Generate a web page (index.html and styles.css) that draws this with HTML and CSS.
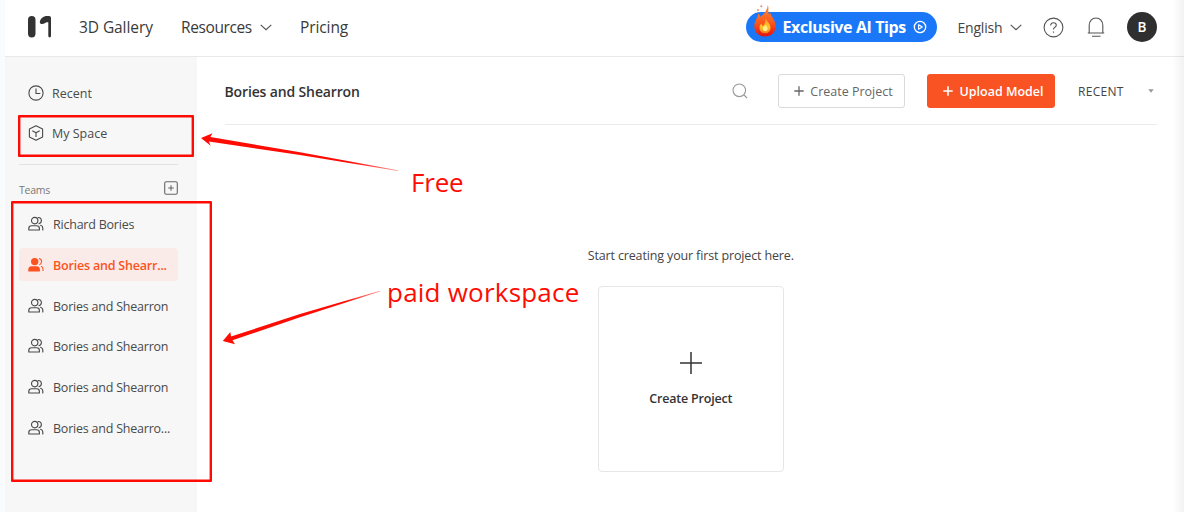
FILE: index.html
```html
<!DOCTYPE html>
<html lang="en">
<head>
<meta charset="utf-8">
<title>Bories and Shearron</title>
<link rel="stylesheet" href="styles.css">
</head>
<body>
<svg class="defs" width="0" height="0" aria-hidden="true">
  <symbol id="team" viewBox="0 0 16 16">
    <g fill="none" stroke="currentColor" stroke-width="1.15" stroke-linecap="round" stroke-linejoin="round">
      <circle cx="6.700" cy="4.600" r="3.200"/>
      <path d="M.8 14v-1.600c0-1.800 1.200-2.700 2.800-2.700h5c1.600 0 2.800.9 2.800 2.700V14z"/>
      <path d="M10.200 1.500c2 .1 3.200 1.400 3.200 3.100s-1.100 2.800-2.500 3.100M12.600 9.300c1.400.4 2.200 1.300 2.200 2.700v2"/>
    </g>
  </symbol>
</svg>
<div class="app">
  <header class="topbar">
    <svg class="logo" viewBox="0 0 24 22" fill="#333">
      <rect x="0" y="0" width="7.500" height="21.500" rx="3.700"/>
      <path d="M11.800 6C12.300 2.500 15.500.1 19 .1h2c1.300 0 2 .8 2 2v17.700c0 2.100-2.700 2.100-2.700 0V6.200c-1.800-.3-2.500.4-3.600 1.100-2.400 1.400-5.100.7-4.900-1.300z"/>
    </svg>
    <a class="nav gallery">3D Gallery</a>
    <a class="nav resources">Resources</a>
    <svg class="chev" viewBox="0 0 12 7"><path d="M.7.9 6 5.700 11.300.9"/></svg>
    <a class="nav pricing">Pricing</a>
    <a class="tips">
      <svg class="flame" viewBox="0 0 24 34">
        <defs>
          <linearGradient id="fire" x1="0" y1="0" x2="0" y2="1"><stop offset="0" stop-color="#ff8a3c"/><stop offset=".55" stop-color="#fb5a1c"/><stop offset="1" stop-color="#e31212"/></linearGradient>
          <linearGradient id="core" x1="0" y1="0" x2="0" y2="1"><stop offset="0" stop-color="#ff9a2e"/><stop offset=".6" stop-color="#ffc42a"/><stop offset="1" stop-color="#ff7a1e"/></linearGradient>
        </defs>
        <path fill="url(#fire)" d="M14.800 1c1.500 3-.5 6.500 1.200 9.500.8-.8.8-1.700 1-2.500 1 4.500 5.700 8 5.700 14.500C22.700 28.500 18 32.500 12 32.500S1.300 28.500 1.300 22.500C1.300 17 4.500 15 5.200 9.500c1.300.8 2 2 2.300 3.500C11 10 14.500 6 14.800 1z"/>
        <path fill="url(#core)" d="M12.500 14c1.500 4 5 5.500 5 9.800 0 3.500-2.400 5.500-5.500 5.500s-5.500-2-5.500-5.300c0-2.200.8-3.500 2.100-4.500.2 1.300.7 2 1.400 2.500 2-2 2.800-4.500 2.500-8z"/>
        <path fill="#fff08a" d="M12.500 20.500c.8 1.800 2.100 2.500 2.100 4.200s-1.200 2.300-2.400 2.300-2.400-.9-2.400-2.300c0-1 .4-1.500 1-1.900.8-.6 1.500-1.300 1.700-2.300z"/>
        <circle cx="8.300" cy="2.300" r="1" fill="#f98052"/><circle cx="5" cy="6" r=".9" fill="#f98052"/>
      </svg>
      <span class="tips-text">Exclusive AI Tips</span>
      <svg class="play" viewBox="0 0 14 14"><circle cx="7" cy="7" r="5.700" fill="none" stroke="#fff" stroke-width="1.300"/><path d="M5.600 4.700v4.600L9.300 7z" fill="none" stroke="#fff" stroke-width="1.100" stroke-linejoin="round"/></svg>
    </a>
    <a class="lang">English</a>
    <svg class="chev" viewBox="0 0 12 7"><path d="M.7.9 6 5.700 11.300.9"/></svg>
    <svg class="help" viewBox="0 0 21 21"><circle cx="10.500" cy="10.500" r="9.400"/><path d="M7.700 8.400c0-1.600 1.200-2.700 2.800-2.700s2.800 1 2.800 2.500c0 2-2.800 2-2.800 4.100v.3M10.500 14.500v1.200"/></svg>
    <svg class="bell" viewBox="0 0 18 20"><path d="M2.200 16V8.200C2.200 4 5 1 9 1s6.800 3 6.800 7.200V16M.8 16h16.400M5 19.200h8.500"/></svg>
    <span class="avatar">B</span>
  </header>

  <div class="body">
    <aside class="side">
      <a class="row recent">
        <svg class="ico" viewBox="0 0 16 16"><g fill="none" stroke="currentColor" stroke-width="1.100"><circle cx="8" cy="8" r="7.100"/><path d="M8 3.500V8.500h4.300"/></g></svg>
        <span>Recent</span>
      </a>
      <a class="row space">
        <svg class="ico" viewBox="0 0 16 16"><g fill="none" stroke="currentColor" stroke-width="1.100" stroke-linejoin="round"><path d="M8 .8 14.600 4v8L8 15.200 1.400 12V4z"/><path d="M4.300 5.700 8 7.800l3.700-2.100M8 7.800v4.200"/></g></svg>
        <span>My Space</span>
      </a>
      <div class="rule"></div>
      <div class="teams-head">
        <span class="teams">Teams</span>
        <svg class="add" viewBox="0 0 14 14"><rect x=".7" y=".7" width="12.600" height="12.600" rx="1.500"/><path d="M7 4.200v5.600M4.200 7h5.600"/></svg>
      </div>
      <nav class="team-list">
        <a class="row rich"><svg class="ico"><use href="#team"/></svg><span>Richard Bories</span></a>
        <a class="row active">
          <svg class="ico" viewBox="0 0 16 16"><circle cx="6.700" cy="4.600" r="3.700" fill="currentColor"/><path fill="currentColor" d="M.3 14.500v-2.100C.3 10.300 1.700 9.200 3.600 9.200h5c1.900 0 3.300 1.100 3.300 3.200v2.100z"/><path d="M11 1.500c1.600.4 2.600 1.500 2.600 3.100s-.9 2.700-2.300 3.100M13 9.300c1.300.5 2 1.400 2 2.700v2" fill="none" stroke="currentColor" stroke-width="1.100"/></svg>
          <span>Bories and Shearr...</span></a>
        <a class="row"><svg class="ico"><use href="#team"/></svg><span>Bories and Shearron</span></a>
        <a class="row"><svg class="ico"><use href="#team"/></svg><span>Bories and Shearron</span></a>
        <a class="row"><svg class="ico"><use href="#team"/></svg><span>Bories and Shearron</span></a>
        <a class="row"><svg class="ico"><use href="#team"/></svg><span>Bories and Shearro...</span></a>
      </nav>
    </aside>

    <main class="main">
      <div class="toolbar">
        <h1 class="title">Bories and Shearron</h1>
        <svg class="search" viewBox="0 0 16 16"><circle cx="7.300" cy="7.300" r="6.300"/><path d="m12 12 3 3"/></svg>
        <a class="btn"><svg class="plus" viewBox="0 0 10 10"><path d="M5 .3v9.400M.3 5h9.400"/></svg><span>Create Project</span></a>
        <a class="btn primary"><svg class="plus" viewBox="0 0 10 10"><path d="M5 .3v9.400M.3 5h9.400"/></svg><span>Upload Model</span></a>
        <span class="sort">RECENT</span>
        <svg class="caret" viewBox="0 0 6 4"><path d="M.3.200h5.400L3 3.800z"/></svg>
      </div>
      <section class="empty">
        <p class="hint">Start creating your first project here.</p>
        <a class="card">
          <svg class="bigplus" viewBox="0 0 22 22"><path d="M11 0v22M0 11h22"/></svg>
          <span>Create Project</span>
        </a>
      </section>
    </main>
  </div>

  <div class="mark mark-space"></div>
  <div class="mark mark-teams"></div>
  <svg class="arrows" viewBox="0 0 1184 512">
    <defs>
      <linearGradient id="a1" gradientUnits="userSpaceOnUse" x1="350" y1="0" x2="400" y2="0"><stop offset="0" stop-color="#fe0c04"/><stop offset="1" stop-color="#fe0c04" stop-opacity=".4"/></linearGradient>
      <linearGradient id="a2" gradientUnits="userSpaceOnUse" x1="345" y1="0" x2="382" y2="0"><stop offset="0" stop-color="#fe0c04"/><stop offset="1" stop-color="#fe0c04" stop-opacity=".4"/></linearGradient>
    </defs>
    <path fill="url(#a1)" d="M201 137.900 212.500 133.200 210.300 137 300 152.200 398 170.300 398 171 300 155.100 208.800 141.600 210.700 145.700z"/>
    <path fill="url(#a2)" d="M222.800 341 230.300 332 231 336.600 300 314 380 290.700 380 291.400 300 317.200 232.500 340.300 235 344.300z"/>
  </svg>
  <span class="note note-free">Free</span>
  <span class="note note-paid">paid workspace</span>
  <div class="edge"></div>
</div>
</body>
</html>
```
FILE: styles.css
```css
* { box-sizing: border-box; }
body { margin: 0; background: #fff; font-family: "Open Sans", "Noto Sans", sans-serif; color: #444; }
.defs { position: absolute; }
.app { position: relative; width: 1184px; height: 512px; overflow: hidden; border-left: 5px solid #fafbfd; background: #fff; }
span, a { white-space: nowrap; }
svg { display: block; flex: none; }

.topbar { display: flex; align-items: center; height: 57px; padding: 0 27px 2px 23px; border-bottom: 1px solid #e9e9e9; }
.logo { width: 24px; height: 22px; margin-right: 27px; }
.nav { font-size: 15.500px; line-height: 22px; color: #3a3a3a; }
.gallery { width: 102px; letter-spacing: -.08px; }
.resources { width: 79px; letter-spacing: -.4px; }
.chev { width: 12px; height: 7px; fill: none; stroke: #555; stroke-width: 1.200; }
.pricing { margin-left: 28px; letter-spacing: -.1px; }
.tips { position: relative; display: flex; align-items: center; width: 191px; height: 30px; margin-left: auto; padding-left: 37px; border-radius: 15px; background: #1a78f8; color: #fff; }
.flame { position: absolute; left: 7px; top: -8px; width: 24px; height: 34px; }
.tips-text { width: 130px; font-size: 16px; font-weight: 700; letter-spacing: -.4px; }
.play { width: 14px; height: 14px; }
.lang { width: 52px; margin-left: 21px; font-size: 14px; letter-spacing: -.2px; }
.help { width: 21px; height: 21px; margin-left: 21.500px; fill: none; stroke: #555; stroke-width: 1.100; }
.bell { width: 18px; height: 20px; margin-left: 23px; fill: none; stroke: #555; stroke-width: 1.100; }
.avatar { width: 30px; height: 30px; margin-left: 22px; border-radius: 50%; background: #2f2f2f; color: #fff; font-size: 13.500px; font-weight: 600; line-height: 30px; text-align: center; }

.body { display: flex; height: 455px; }
.side { width: 191.500px; padding: 19px 18.500px 0 14px; background: #f7f7f7; }
.row { display: flex; align-items: center; height: 33px; margin-bottom: 7.750px; padding-left: 9px; border-radius: 4px; font-size: 12.500px; line-height: 18px; letter-spacing: -.22px; color: #4a4a4a; }
.row span { padding-top: 2px; }
.rich { letter-spacing: -.22px; }
.ico { width: 16px; height: 16px; margin-right: 9px; }
.recent .ico, .space .ico { margin-right: 8px; }
.recent, .space { letter-spacing: 0; }
.rule { height: 1px; margin-top: 14.500px; background: #e2e2e2; }
.teams-head { display: flex; align-items: center; justify-content: space-between; height: 16px; margin: 16px 0 10.250px; font-size: 10.500px; letter-spacing: -.25px; color: #777; }
.teams { padding-top: 2px; }
.add { width: 14px; height: 14px; margin-bottom: 3px; fill: none; stroke: #666; stroke-width: 1.100; }
.active { background: #faeae8; color: #fb5321; font-weight: 600; letter-spacing: -.2px; }

.main { flex: 1; padding: 0 27px 0 28px; }
.toolbar { display: flex; align-items: center; height: 68px; border-bottom: 1px solid #ebebeb; }
.title { margin: 0; padding-top: 2px; font-size: 14px; font-weight: 600; color: #333; letter-spacing: -.14px; }
.search { width: 16px; height: 16px; margin-left: auto; margin-right: 30px; fill: none; stroke: #999; stroke-width: 1.100; }
.btn { display: flex; align-items: center; justify-content: center; gap: 6px; width: 127px; height: 34px; margin-right: 22px; padding-left: 4px; border: 1px solid #dadada; border-radius: 3px; font-size: 12.500px; font-weight: 500; color: #666; }
.btn span { padding-top: 1px; }
.primary { width: 128px; padding-left: 5px; border-color: #fa5323; background: #fa5323; color: #fff; font-weight: 600; }
.plus { width: 10px; height: 10px; fill: none; stroke: currentColor; stroke-width: 1.300; }
.primary .plus { stroke-width: 1.600; }
.sort { width: 70px; margin-left: 1px; font-size: 12px; letter-spacing: .3px; padding-top: 1px; }
.caret { width: 6px; height: 4px; margin-right: 3px; fill: #999; }
.empty { display: flex; flex-direction: column; align-items: center; }
.hint { margin: 122px 0 21px; font-size: 12.500px; line-height: 18px; letter-spacing: -.14px; }
.card { display: flex; flex-direction: column; align-items: center; width: 186px; height: 186px; padding-top: 65px; border: 1px solid #e6e6e6; border-radius: 4px; font-size: 12.500px; font-weight: 600; letter-spacing: -.2px; color: #333; }
.bigplus { width: 22px; height: 22px; margin-bottom: 16px; fill: none; stroke: #333; stroke-width: 1.500; }

/* Annotations drawn over the interface */
.mark { position: absolute; box-shadow: inset 0 0 0 2.400px #fe0c04; border-radius: 1px; }
.mark-space { left: 13px; top: 115px; width: 175.500px; height: 42px; }
.mark-teams { left: 6px; top: 201px; width: 201px; height: 280.500px; }
.arrows { position: absolute; left: -5px; top: 0; width: 1184px; height: 512px; }
.note { position: absolute; color: #fe0c04; font-size: 26px; line-height: 36px; }
.note-free { left: 406px; top: 164px; letter-spacing: -.2px; }
.note-paid { left: 382px; top: 274px; letter-spacing: .22px; }
.edge { position: absolute; right: 0; top: 0; width: 12px; height: 512px; background: linear-gradient(to right, rgba(0,0,0,0), rgba(0,0,0,.05)); }
```
